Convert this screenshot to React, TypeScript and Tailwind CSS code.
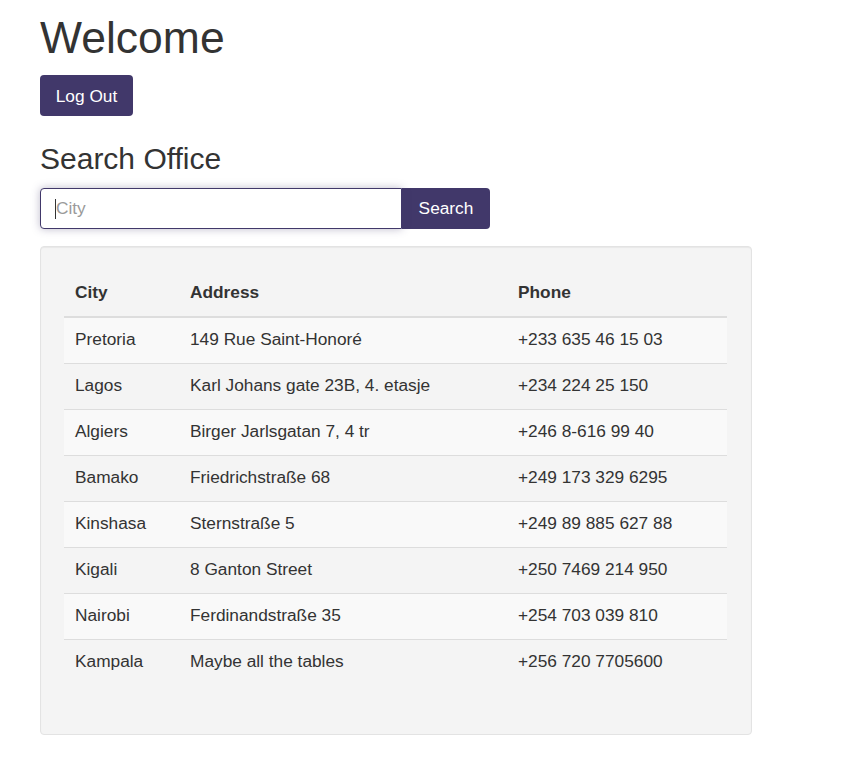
import React from "react";

const rows = [
  ["Pretoria", "149 Rue Saint-Honoré", "+233 635 46 15 03"],
  ["Lagos", "Karl Johans gate 23B, 4. etasje", "+234 224 25 150"],
  ["Algiers", "Birger Jarlsgatan 7, 4 tr", "+246 8-616 99 40"],
  ["Bamako", "Friedrichstraße 68", "+249 173 329 6295"],
  ["Kinshasa", "Sternstraße 5", "+249 89 885 627 88"],
  ["Kigali", "8 Ganton Street", "+250 7469 214 950"],
  ["Nairobi", "Ferdinandstraße 35", "+254 703 039 810"],
  ["Kampala", "Maybe all the tables", "+256 720 7705600"],
];

export default function App() {
  return (
    <div
      className="min-h-[772px] bg-white text-[#333333] text-[17.3px]"
      style={{ fontFamily: '"Liberation Sans", Arial, sans-serif' }}
    >
      <div className="pl-[40px] flex flex-col items-start">
        <h1 className="mt-[14px] text-[44.5px] leading-[48px] font-normal">Welcome</h1>
        <button className="mt-[13px] h-[41px] w-[93px] rounded-[4px] bg-[#41386a] text-white text-[17.3px] leading-[20px]">
          Log Out
        </button>
        <h2 className="mt-[26px] text-[30px] leading-[33px] font-normal">Search Office</h2>
        <div className="mt-[13px] flex h-[41px]">
          <div className="relative w-[362px] h-[41px]">
            <input
              placeholder="City"
              className="block w-full h-[41px] border border-[#41386a] rounded-l-[4px] pl-[15px] bg-white outline-none placeholder-[#9a9a9a] text-[17.3px] shadow-[0_0_9px_rgba(65,56,106,0.35)]"
            />
            <span className="absolute left-[15px] top-[11px] w-px h-[20px] bg-[#333]" />
          </div>
          <button className="w-[88px] h-[41px] rounded-r-[4px] bg-[#41386a] text-white text-[17.3px]">
            Search
          </button>
        </div>
        <div className="mt-[17px] w-[712px] h-[489px] border border-[#e3e3e3] rounded-[4px] bg-[#f4f4f4] px-[23px] pt-[23px] shadow-[inset_0_1px_1px_rgba(0,0,0,0.05)]">
          <table className="w-[663px] border-collapse">
            <thead>
              <tr className="border-b-2 border-[#dddddd]">
                <th className="w-[115px] h-[47px] px-[11px] text-left font-bold">City</th>
                <th className="w-[328px] h-[47px] px-[11px] text-left font-bold">Address</th>
                <th className="h-[47px] px-[11px] text-left font-bold">Phone</th>
              </tr>
            </thead>
            <tbody>
              {rows.map((r, i) => (
                <tr
                  key={r[0]}
                  className={
                    (i > 0 ? "border-t border-[#dddddd] " : "") +
                    (i % 2 === 0 ? "bg-[#f9f9f9]" : "")
                  }
                >
                  <td className="h-[46px] px-[11px]">{r[0]}</td>
                  <td className="h-[46px] px-[11px]">{r[1]}</td>
                  <td className="h-[46px] px-[11px]">{r[2]}</td>
                </tr>
              ))}
            </tbody>
          </table>
        </div>
      </div>
    </div>
  );
}
